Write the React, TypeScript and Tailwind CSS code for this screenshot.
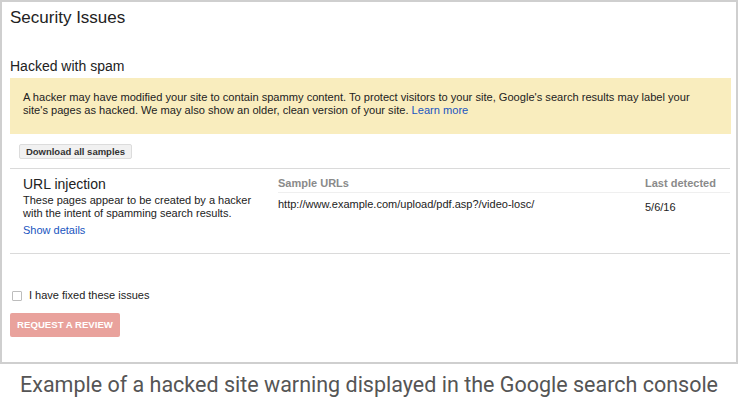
import React from "react";

const sans = { fontFamily: '"Liberation Sans", Arial, sans-serif' };

const App: React.FC = () => {
  return (
    <div className="w-[738px] h-[400px] bg-white overflow-hidden">
      <div
        className="h-[364px] border-2 border-[#cfcfcf] flex flex-col text-[#222]"
        style={sans}
      >
        <h1 className="mt-[6px] ml-[8px] text-[17px] leading-[20px] font-normal">
          Security Issues
        </h1>

        <h2 className="mt-[30px] ml-[8px] text-[14px] leading-[16px] font-normal">
          Hacked with spam
        </h2>

        <div className="mt-[4px] ml-[8px] w-[721px] h-[56px] bg-[#f9edbe] pt-[13px] pl-[13px] text-[11.1px] leading-[13px]">
          A hacker may have modified your site to contain spammy content. To
          protect visitors to your site, Google's search results may label your
          <br />
          site's pages as hacked. We may also show an older, clean version of
          your site.{" "}
          <a href="#" className="text-[#1a55c0]">
            Learn more
          </a>
        </div>

        <div className="mt-[10px] ml-[17px] flex">
          <button className="w-[113px] h-[15px] bg-[#f1f1f1] border border-[#dcdcdc] rounded-[2px] text-[9.5px] leading-[13px] font-bold text-[#333]">
            Download all samples
          </button>
        </div>

        <div className="mt-[9px] ml-[8px] w-[720px] border-t border-[#dadada]" />

        <div className="ml-[21px] w-[707px] h-[84px] grid grid-cols-[255px_367px_1fr]">
          <div className="flex flex-col">
            <div className="mt-[7px] text-[14px] leading-[16px]">URL injection</div>
            <div className="mt-[2px] text-[11px] leading-[13px]">
              These pages appear to be created by a hacker
              <br />
              with the intent of spamming search results.
            </div>
            <a href="#" className="mt-[4px] text-[11px] leading-[13px] text-[#1a55c0]">
              Show details
            </a>
          </div>
          <div className="col-span-2 flex flex-col">
            <div className="mt-[8px] h-[16px] border-b border-[#efefef] grid grid-cols-[367px_1fr] text-[11px] leading-[13px] font-bold text-[#8a8a8a]">
              <span>Sample URLs</span>
              <span>Last detected</span>
            </div>
            <div className="grid grid-cols-[367px_1fr] text-[11px] leading-[13px]">
              <span className="mt-[5px]">
                http://www.example.com/upload/pdf.asp?/video-losc/
              </span>
              <span className="mt-[8px]">5/6/16</span>
            </div>
          </div>
        </div>

        <div className="ml-[8px] w-[720px] border-t border-[#dadada]" />

        <label className="mt-[35px] ml-[10px] flex items-center gap-[7px] text-[11px] leading-[13px]">
          <span className="w-[10px] h-[10px] border border-[#bdbdbd] rounded-[1px] bg-white" />
          I have fixed these issues
        </label>

        <div className="mt-[11px] ml-[8px] flex">
          <button className="w-[110px] h-[24px] bg-[#e9a29c] rounded-[2px] text-white text-[9.6px] font-bold">
            REQUEST A REVIEW
          </button>
        </div>
      </div>

      <p
        className="mt-[9px] ml-[20px] text-[21.5px] leading-[24px] text-[#555]"
        style={{ fontFamily: "Roboto, sans-serif" }}
      >
        Example of a hacked site warning displayed in the Google search console
      </p>
    </div>
  );
};

export default App;
